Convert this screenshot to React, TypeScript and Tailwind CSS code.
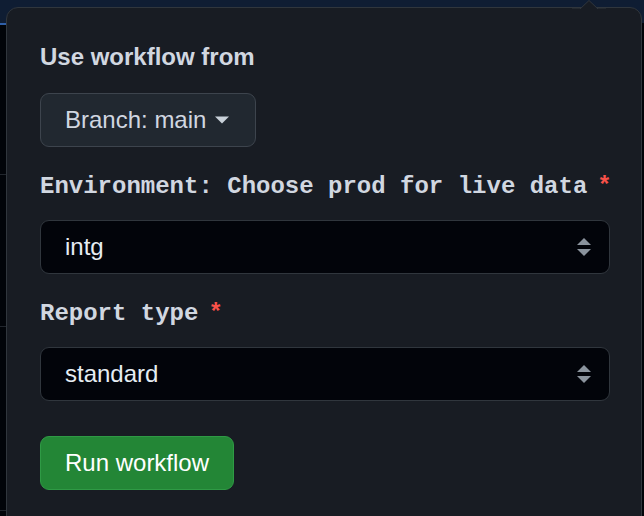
import React from 'react';

const sans = "font-['Liberation_Sans',Arial,sans-serif]";
const mono = "font-['Liberation_Mono','Courier_New',monospace]";

function SelectArrows() {
  return (
    <svg width="16" height="20" viewBox="0 0 16 20" className="shrink-0">
      <path d="M8 1 L15 8 L1 8 Z" fill="#8b949e" />
      <path d="M1 12 L15 12 L8 19 Z" fill="#8b949e" />
    </svg>
  );
}

function FakeSelect({ value }: { value: string }) {
  return (
    <div className="flex h-[54px] w-[570px] items-center justify-between rounded-[9px] border border-[#30363d] bg-[#02040a] pl-[24px] pr-[17px]">
      <span className={`${sans} text-[24px] text-[#e6edf3]`}>{value}</span>
      <SelectArrows />
    </div>
  );
}

function FieldLabel({ text }: { text: string }) {
  return (
    <div className={`${mono} flex h-[30px] items-center text-[24px] font-bold leading-[30px] text-[#d1d7e0]`}>
      <span className="whitespace-pre">{text}</span>
      <span className="ml-[10px] text-[#f85149]">*</span>
    </div>
  );
}

export default function App() {
  return (
    <div className="relative h-[516px] w-[644px] overflow-hidden bg-[#010409]">
      {/* page behind the popover */}
      <div className="h-[23px] bg-[#0f1d33]" />
      <div className="h-[2px] w-[10px] bg-[#2f5fa8]" />
      <div className="absolute left-0 top-[174px] h-px w-[10px] bg-[#21262d]" />
      <div className="absolute left-0 top-[326px] h-px w-[10px] bg-[#21262d]" />
      <div className="absolute left-0 top-[510px] h-px w-[10px] bg-[#21262d]" />

      {/* popover */}
      <div className="absolute left-[6px] top-[7px] h-[540px] w-[636px] rounded-[12px] border border-[#30363d] bg-[#181c23] pl-[33px]">
        <svg width="34" height="10" viewBox="0 0 34 10" className="absolute -top-[8px] left-[565px]">
          <path d="M0 9 L8 9 L17 0.5 L26 9 L34 9" fill="#181c23" stroke="#30363d" strokeWidth="1" />
          <rect x="0" y="9" width="34" height="1" fill="#181c23" />
        </svg>

        <div className={`${sans} mt-[34px] h-[30px] text-[24px] font-bold leading-[30px] text-[#d1d7e0]`}>
          Use workflow from
        </div>

        <button className={`${sans} mt-[21px] flex h-[54px] items-center gap-[9px] rounded-[9px] border border-[#3d444d] bg-[#212830] pl-[24px] pr-[26px] text-[24px] text-[#d1d7e0]`}>
          <span>Branch: main</span>
          <svg width="14" height="8" viewBox="0 0 14 8">
            <path d="M0 0.5 L14 0.5 L7 7.5 Z" fill="#c9d1d9" />
          </svg>
        </button>

        <div className="mt-[25px]">
          <FieldLabel text="Environment: Choose prod for live data" />
        </div>
        <div className="mt-[18px]">
          <FakeSelect value="intg" />
        </div>

        <div className="mt-[25px]">
          <FieldLabel text="Report type" />
        </div>
        <div className="mt-[18px]">
          <FakeSelect value="standard" />
        </div>

        <button className={`${sans} mt-[35px] flex h-[54px] items-center rounded-[9px] border border-[#2f9a45] bg-[#238636] px-[24px] text-[24px] text-white`}>
          Run workflow
        </button>
      </div>
    </div>
  );
}
